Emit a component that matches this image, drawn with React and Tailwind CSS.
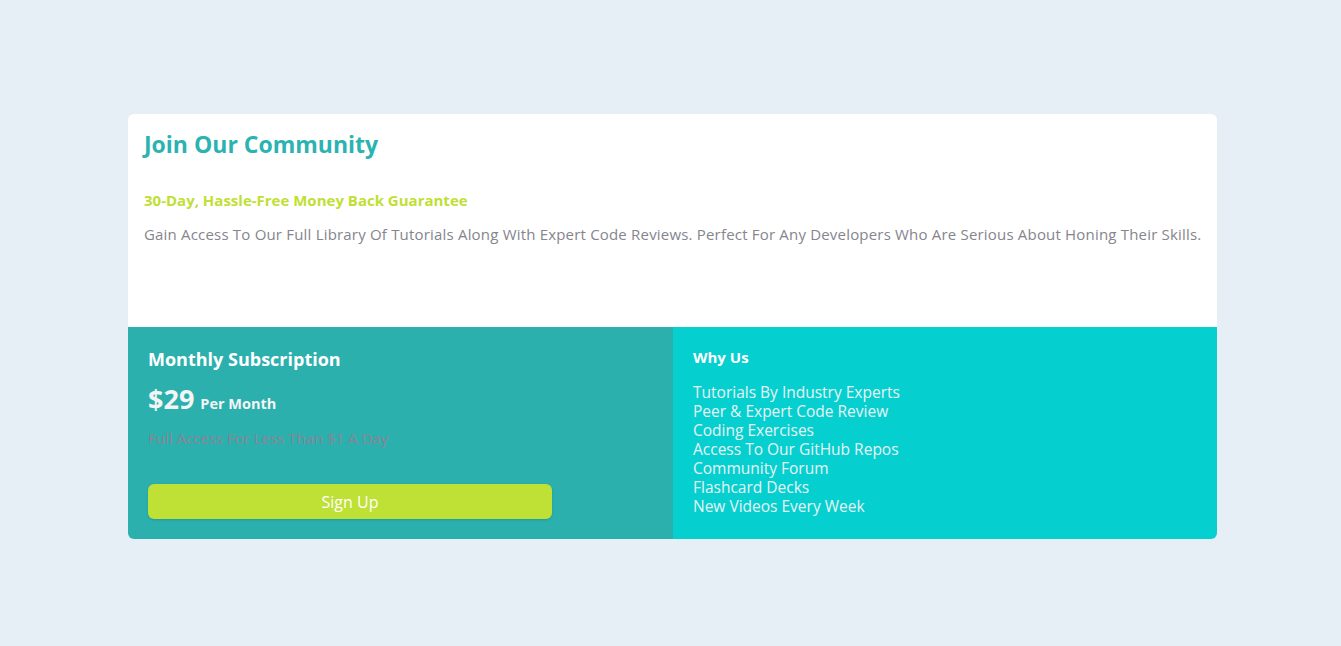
const features = [
  "Tutorials By Industry Experts",
  "Peer & Expert Code Review",
  "Coding Exercises",
  "Access To Our GitHub Repos",
  "Community Forum",
  "Flashcard Decks",
  "New Videos Every Week",
];

export default function App() {
  return (
    <div className="min-h-screen bg-[#e6eef6] pt-[114px] font-['Open_Sans',sans-serif]">
      <div className="ml-[128px] w-[1089px] h-[425px] rounded-md overflow-hidden flex flex-col">
        {/* top */}
        <div className="bg-white h-[213px] px-4 pt-[14px]">
          <h1 className="text-[23px] font-bold text-[#2bb3b1] leading-[32px]">Join Our Community</h1>
          <h2 className="mt-[29px] text-[15px] font-bold text-[#c0df34] leading-[22px]">
            30-Day, Hassle-Free Money Back Guarantee
          </h2>
          <p className="mt-[12px] text-[15px] tracking-[0.19px] whitespace-nowrap text-[#85858d] leading-[22px]">
            Gain Access To Our Full Library Of Tutorials Along With Expert Code Reviews. Perfect For Any Developers Who Are Serious About Honing Their Skills.
          </p>
        </div>
        {/* bottom */}
        <div className="flex h-[212px]">
          <div className="w-[545px] bg-[#2bb0ae] px-5 pt-[19px]">
            <h3 className="text-[18px] font-bold text-white leading-[26px]">Monthly Subscription</h3>
            <div className="mt-[11px] flex items-baseline gap-[6px] text-[#f3f5f5]">
              <span className="text-[27px] font-bold leading-[32px]">$29</span>
              <span className="text-[14.5px] font-bold">Per Month</span>
            </div>
            <p className="mt-[12px] text-[15px] text-[#8b8593] leading-[22px]">Full Access For Less Than $1 A Day</p>
            <button className="mt-[35px] w-[404px] h-[35px] rounded-md bg-[#bfe034] text-white text-[16px] shadow-sm">
              Sign Up
            </button>
          </div>
          <div className="flex-1 bg-[#06cfd0] px-5 pt-[19px]">
            <h3 className="text-[15px] font-bold text-white leading-[22px]">Why Us</h3>
            <ul className="mt-[15px] text-[15.5px] text-[#e6f3f3] leading-[19px]">
              {features.map((f) => (
                <li key={f}>{f}</li>
              ))}
            </ul>
          </div>
        </div>
      </div>
    </div>
  );
}
